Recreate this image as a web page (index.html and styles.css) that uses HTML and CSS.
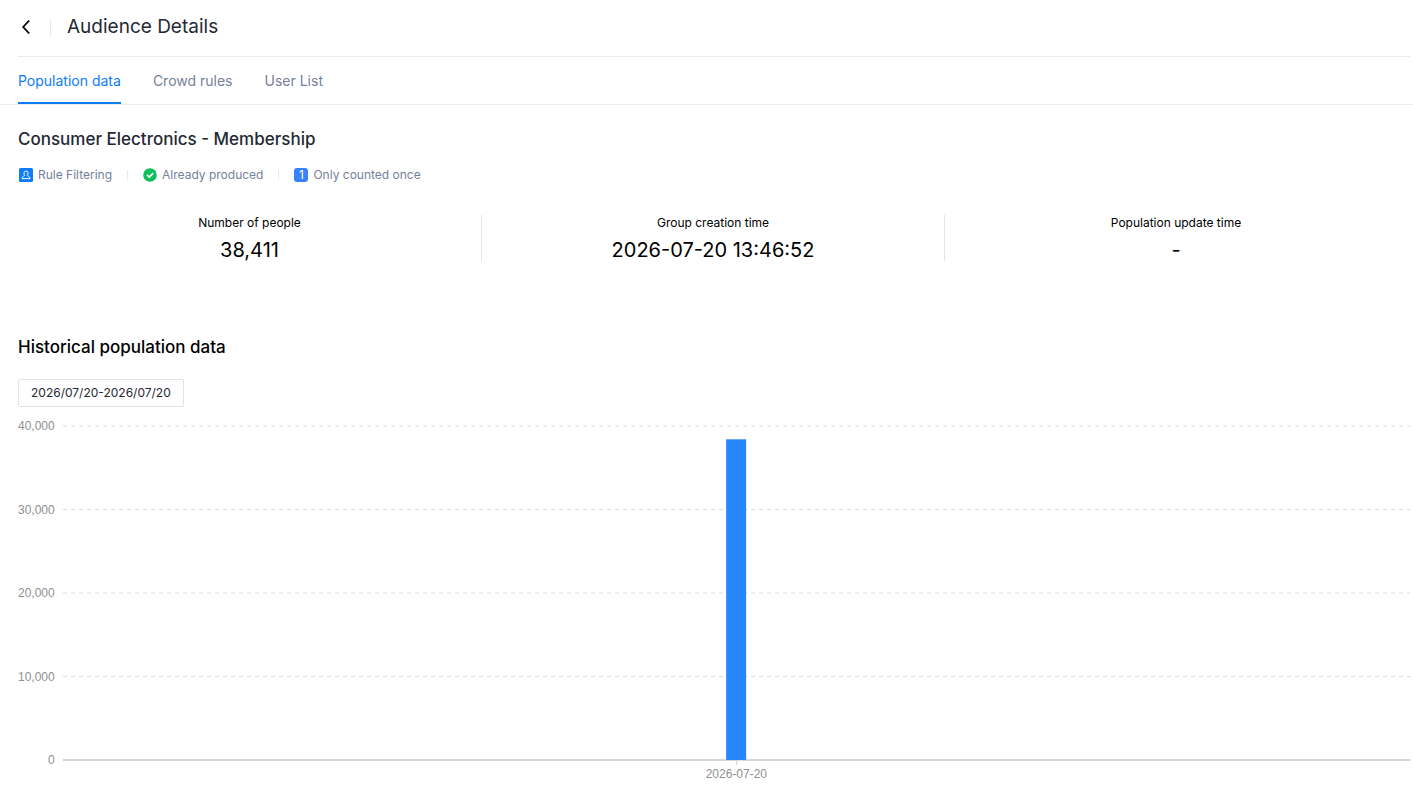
FILE: index.html
```html
<!DOCTYPE html>
<html lang="en">
<head>
<meta charset="utf-8">
<title>Audience Details</title>
<link rel="stylesheet" href="styles.css">
</head>
<body>
<header class="page-header">
  <button class="back" type="button" aria-label="Back">
    <svg width="16" height="16" viewBox="0 0 16 16" fill="none" stroke="#000" stroke-width="1.8"><path d="M11.200 1.500 5.200 8l6 6.500"/></svg>
  </button>
  <span class="header-divider"></span>
  <h1 class="page-title">Audience Details</h1>
</header>
<nav class="tabs">
  <a class="tab tab-active" href="#population">Population data</a>
  <a class="tab" href="#rules">Crowd rules</a>
  <a class="tab" href="#users">User List</a>
</nav>
<main class="content" id="population">
  <h2 class="group-name">Consumer Electronics - Membership</h2>
  <ul class="tags">
    <li class="tag">
      <svg width="14" height="14" viewBox="0 0 14 14"><rect width="14" height="14" rx="1.5" fill="#0d7cf9"/><path d="M5.7 7.4C4.5 6.2 4.6 3 7 3s2.500 3.200 1.300 4.400c0 .8 2.700.8 2.700 3.200H3c0-2.400 2.700-2.400 2.700-3.200Z" fill="none" stroke="#fff" stroke-width="1"/></svg>
      Rule Filtering
    </li>
    <li class="tag">
      <svg width="14" height="14" viewBox="0 0 14 14"><circle cx="7" cy="7" r="6.800" fill="#0bbf5b"/><path d="m4 6.800 2.300 2.300 3.900-3.900" fill="none" stroke="#fff" stroke-width="1.700"/></svg>
      Already produced
    </li>
    <li class="tag">
      <span class="count-badge">1</span>
      Only counted once
    </li>
  </ul>
  <dl class="stats">
    <div class="stat"><dt>Number of people</dt><dd>38,411</dd></div>
    <div class="stat"><dt>Group creation time</dt><dd>2026-07-20 13:46:52</dd></div>
    <div class="stat"><dt>Population update time</dt><dd>-</dd></div>
  </dl>
  <h2 class="section-title">Historical population data</h2>
  <button class="date-range" type="button">2026/07/20-2026/07/20</button>
  <div class="chart">
    <div class="y-axis"><span>40,000</span><span>30,000</span><span>20,000</span><span>10,000</span><span>0</span></div>
    <div class="plot">
      <svg class="plot-area" width="100%" height="334">
        <g class="grid-lines">
          <line x1="0" x2="100%" y1="0" y2="0"/>
          <line x1="0" x2="100%" y1="83.500" y2="83.500"/>
          <line x1="0" x2="100%" y1="167" y2="167"/>
          <line x1="0" x2="100%" y1="250.500" y2="250.500"/>
        </g>
        <line class="axis-line" x1="0" x2="100%" y1="334" y2="334"/>
        <line class="axis-dash" x1="0" x2="100%" y1="334" y2="334"/>
        <svg class="bar-slot" x="50%">
          <line class="tick" x1="0" x2="0" y1="334" y2="339"/>
          <rect class="bar" x="-10.500" y="13.300" width="20" height="320.700"/>
        </svg>
      </svg>
      <span class="x-label">2026-07-20</span>
    </div>
  </div>
</main>
</body>
</html>
```
FILE: styles.css
```css
* {
  box-sizing: border-box;
}

body {
  margin: 0;
  background: #fff;
  color: #000;
  font-family: Inter, "Liberation Sans", sans-serif;
  font-size: 12px;
}

h1, h2, ul, dl, dd {
  margin: 0;
  padding: 0;
  font-weight: 400;
}

.page-header {
  display: flex;
  align-items: center;
  height: 57px;
  margin: 0 3px 0 18px;
  padding-bottom: 2px;
  border-bottom: 1px solid #e8eaee;
}

.back {
  display: flex;
  padding: 0;
  border: 0;
  background: none;
  cursor: pointer;
}

.header-divider {
  width: 1px;
  height: 18px;
  margin: 2px 16px 0;
  background: #e8eaee;
}

.page-title {
  color: #242933;
  font-size: 19px;
  line-height: 28px;
}

.tabs {
  display: flex;
  gap: 32px;
  height: 48px;
  padding-left: 18px;
  border-bottom: 1px solid #e8eaee;
}

.tab {
  color: #75819a;
  font-size: 14px;
  line-height: 48px;
  text-decoration: none;
}

.tab-active {
  border-bottom: 2px solid #0d7cf9;
  color: #0d7cf9;
}

.content {
  padding: 20px 3px 0 18px;
}

.group-name,
.section-title {
  font-size: 17px;
  font-weight: 500;
  line-height: 28px;
}

.group-name {
  color: #242933;
}

.tags {
  display: flex;
  margin-top: 12px;
  padding-left: 1px;
  list-style: none;
}

.tag {
  display: flex;
  align-items: center;
  gap: 5px;
  color: #75819a;
  line-height: 20px;
}

.tag + .tag::before {
  content: "";
  width: 1px;
  height: 10px;
  margin: 0 10px 0 15px;
  background: #e8eaee;
}

.count-badge {
  width: 14px;
  border-radius: 3px;
  background: #3a82fb;
  color: #fff;
  line-height: 14px;
  text-align: center;
}

.stats {
  display: grid;
  grid-template-columns: repeat(3, 1fr);
  margin: 30px 3px 0 0;
}

.stat {
  height: 46px;
  text-align: center;
}

.stat + .stat {
  border-left: 1px solid #e3e5e9;
}

.stat dt {
  line-height: 16px;
}

.stat dd {
  margin-top: 4px;
  font-size: 20px;
  line-height: 30px;
}

.section-title {
  margin-top: 72px;
}

.date-range {
  display: block;
  height: 28px;
  margin-top: 18px;
  padding: 0 12px 2px;
  border: 1px solid #e0e3e9;
  border-radius: 2px;
  background: #fff;
  color: #242933;
  font-family: inherit;
  font-size: 12px;
}

.chart {
  display: flex;
  gap: 8px;
  margin-top: 12px;
  color: #8f8f8f;
  font-family: "Liberation Sans", Arial, sans-serif;
  line-height: 14px;
}

.y-axis {
  display: flex;
  flex-direction: column;
  justify-content: space-between;
  height: 348px;
  text-align: right;
}

.plot {
  display: flex;
  flex: 1;
  flex-direction: column;
  align-items: center;
  padding-top: 7px;
}

.plot-area,
.bar-slot {
  overflow: visible;
}

.grid-lines {
  stroke: #dcdcdc;
  stroke-dasharray: 4 4;
}

.axis-line {
  stroke: #dedede;
  stroke-width: 2px;
}

.axis-dash {
  stroke: #d3d3d3;
  stroke-width: 2px;
  stroke-dasharray: 4 4;
}

.tick {
  stroke: #d3d3d3;
}

.bar {
  fill: #2787fa;
}

.x-label {
  margin-top: 7px;
}
```
